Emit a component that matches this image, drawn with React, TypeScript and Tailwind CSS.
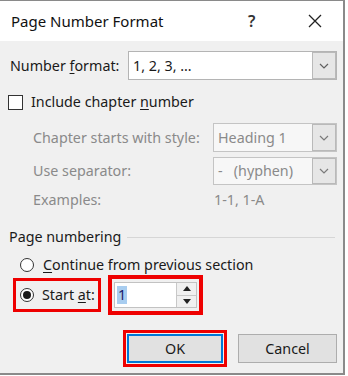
import React from "react";

const font = { fontFamily: '"Noto Sans", "Open Sans", sans-serif' };

function Chevron({ color = "#606060" }: { color?: string }) {
  return (
    <svg width="10" height="6" viewBox="0 0 10 6">
      <path d="M1 1 L5 5 L9 1" fill="none" stroke={color} strokeWidth="1.2" />
    </svg>
  );
}

function Select({
  value,
  width,
  height,
  disabled,
}: {
  value: string;
  width: string;
  height: string;
  disabled?: boolean;
}) {
  return (
    <div
      className={`flex ${width} ${height} border ${
        disabled ? "border-[#c4c4c4] bg-[#f7f7f7] text-[#8a8a8a]" : "border-[#b4b4b4] bg-white text-[#1a1a1a]"
      }`}
    >
      <div className="flex flex-1 items-center whitespace-pre pl-[4px]">{value}</div>
      <div className="flex w-[24px] items-center justify-center border border-[#b9b9b9] bg-[#e6e6e6]">
        <Chevron color={disabled ? "#7a7a7a" : "#606060"} />
      </div>
    </div>
  );
}

function Radio({ checked }: { checked?: boolean }) {
  return (
    <div className="flex h-[14px] w-[14px] items-center justify-center rounded-full border border-[#333333] bg-white">
      {checked && <div className="h-[8px] w-[8px] rounded-full bg-[#1a1a1a]" />}
    </div>
  );
}

export default function App() {
  return (
    <div className="h-[376px] w-[348px] bg-white" style={font}>
      <div className="flex h-[375px] w-[345px] flex-col border-t border-r-2 border-b-2 border-[#8a8a8a] text-[#1a1a1a]">
        <div className="flex h-[40px] items-center bg-white">
          <div className="w-[248px] pl-[11px] text-[15px] text-[#111]">Page Number Format</div>
          <div className="w-[10px] text-[16px] font-semibold text-[#333]">?</div>
          <div className="ml-[49px]">
            <svg width="16" height="16" viewBox="0 0 16 16">
              <path d="M2 2 L14 14 M14 2 L2 14" stroke="#222" strokeWidth="1.3" />
            </svg>
          </div>
        </div>
        <div className="flex flex-1 flex-col bg-[#f0f0f0] text-[14.3px]">
          {/* Number format */}
          <div className="mt-[10px] flex h-[29px] items-center">
            <div className="w-[128px] pl-[10px]">
              Number <span className="underline underline-offset-2">f</span>ormat:
            </div>
            <Select value="1, 2, 3, …" width="w-[209px]" height="h-[29px]" />
          </div>
          {/* checkbox */}
          <div className="mt-[14px] flex h-[16px] items-center pl-[8px]">
            <div className="h-[15px] w-[15px] border border-[#333] bg-white" />
            <div className="ml-[8px]">
              Include chapter <span className="underline underline-offset-2">n</span>umber
            </div>
          </div>
          {/* chapter starts */}
          <div className="mt-[13px] flex h-[29px] items-center text-[#8a8a8a]">
            <div className="w-[213px] pl-[33px]">Chapter starts with style:</div>
            <Select value="Heading 1" width="w-[124px]" height="h-[29px]" disabled />
          </div>
          <div className="mt-[5px] flex h-[28px] items-center text-[#8a8a8a]">
            <div className="w-[213px] pl-[33px]">Use separator:</div>
            <Select value="-   (hyphen)" width="w-[124px]" height="h-[28px]" disabled />
          </div>
          <div className="mt-[5px] flex h-[20px] items-center text-[#8a8a8a]">
            <div className="w-[213px] pl-[33px]">Examples:</div>
            <div className="pl-[1px]">1-1, 1-A</div>
          </div>
          {/* Page numbering */}
          <div className="mt-[17px] flex h-[20px] items-center">
            <div className="pl-[9px]">Page numbering</div>
            <div className="ml-[6px] mr-[8px] h-px flex-1 bg-[#d6d6d6]" />
          </div>
          <div className="mt-[8px] flex h-[20px] items-center pl-[20px]">
            <Radio />
            <div className="ml-[9px]">
              <span className="underline underline-offset-2">C</span>ontinue from previous section
            </div>
          </div>
          <div className="flex h-[40px] items-center">
            <div className="ml-[13px] flex h-[34px] w-[88px] items-center border-[3px] border-[#ee0000] pl-[4px]">
              <Radio checked />
              <div className="ml-[8px]">
                Start <span className="underline underline-offset-2">a</span>t:
              </div>
            </div>
            <div className="ml-[7px] flex h-[40px] w-[95px] items-center justify-center border-[4px] border-[#ee0000]">
              <div className="flex h-[26px] w-[83px] border border-[#c2c2c2] bg-white">
                <div className="flex flex-1 items-center pl-[2px]">
                  <span className="bg-[#a8cdf0] px-[1px] leading-[18px] text-[#1a1a6a]">1</span>
                </div>
                <div className="flex w-[20px] flex-col border-l border-[#c8c8c8]">
                  <div className="flex flex-1 items-center justify-center border-b border-[#c8c8c8] bg-[#f0f0f0]">
                    <svg width="8" height="5" viewBox="0 0 8 5">
                      <path d="M0 5 L4 0 L8 5 Z" fill="#222" />
                    </svg>
                  </div>
                  <div className="flex flex-1 items-center justify-center bg-[#f0f0f0]">
                    <svg width="8" height="5" viewBox="0 0 8 5">
                      <path d="M0 0 L4 5 L8 0 Z" fill="#222" />
                    </svg>
                  </div>
                </div>
              </div>
            </div>
          </div>
          {/* buttons */}
          <div className="mt-[15px] flex h-[37px] items-center">
            <div className="ml-[123px] flex h-[37px] w-[104px] items-center justify-center border-[3px] border-[#ee0000]">
              <div className="flex h-[29px] w-[96px] items-center justify-center border-2 border-[#0078d7] bg-[#e1e1e1]">
                OK
              </div>
            </div>
            <div className="ml-[11px] flex h-[29px] w-[99px] items-center justify-center border border-[#adadad] bg-[#e1e1e1]">
              Cancel
            </div>
          </div>
        </div>
      </div>
    </div>
  );
}
